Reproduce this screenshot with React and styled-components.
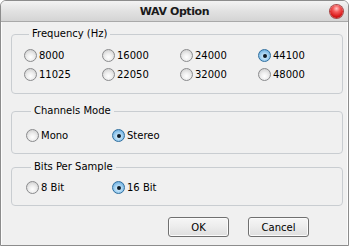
import React, { useState } from 'react';
import styled, { createGlobalStyle } from 'styled-components';

const GlobalStyle = createGlobalStyle`
    html, body {
        margin: 0;
        padding: 0;
        background: #ffffff;
    }
    body {
        font-family: "DejaVu Sans", Verdana, sans-serif;
        font-size: 10px;
        color: #000;
    }
`;

const Window = styled.div`
    width: 347px;
    height: 244px;
    border: 1px solid #8c8c8c;
    border-radius: 6px 6px 0 0;
    background: #f0f0f0;
    display: flex;
    flex-direction: column;
    overflow: hidden;
    box-shadow: inset 1px 0 0 #fdfdfd, inset -1px 0 0 #fdfdfd;
`;

const TitleBar = styled.div`
    height: 20px;
    flex: none;
    display: flex;
    align-items: center;
    justify-content: center;
    position: relative;
    background: linear-gradient(#f3f3f3, #e2e2e2 50%, #d4d4d4);
    border-bottom: 1px solid #a9a9a9;
    font-weight: bold;
    font-size: 11px;
    letter-spacing: -0.4px;
    color: #1a1a1a;
`;

const CloseButton = styled.div`
    position: absolute;
    right: 5px;
    top: 4px;
    width: 13px;
    height: 13px;
    border-radius: 50%;
    background: radial-gradient(circle at 50% 28%, #ffc4c4 0%, #f55a5a 30%, #d71616 70%, #9a0000 100%);
    box-shadow: 0 0 0 1px #a84848;
`;

const Content = styled.div`
    flex: 1;
    display: flex;
    flex-direction: column;
    padding: 6px 5px 0 10px;
`;

const Group = styled.fieldset`
    margin: ${p => p.$mt || 0}px 0 0 0;
    padding: ${p => p.$pt}px 8px ${p => p.$pb}px ${p => p.$pl}px;
    border: 1px solid #c9cdd1;
    border-radius: 4px;
    min-width: 0;
`;

const Legend = styled.legend`
    margin-left: 5px;
    padding: 0 3px;
    line-height: 12px;
    font-size: 10px;
`;

const RadioGrid = styled.div`
    display: grid;
    grid-template-columns: repeat(${p => p.$cols}, ${p => p.$colw}px);
`;

const Option = styled.label`
    display: flex;
    align-items: center;
    gap: 2px;
    height: 19px;
    cursor: pointer;
`;

const RadioDot = styled.span`
    width: 11px;
    height: 11px;
    border-radius: 50%;
    border: 1px solid ${p => (p.$on ? '#2f6f9f' : '#8a8b8d')};
    background: ${p =>
        p.$on
            ? 'radial-gradient(circle at 50% 60%, #e6f5fe 0%, #a9d5f3 40%, #4f9bd6 100%)'
            : 'radial-gradient(circle at 50% 65%, #ffffff 0%, #eeeeee 40%, #c6c6c6 100%)'};
    display: flex;
    align-items: center;
    justify-content: center;
    flex: none;
    &::after {
        content: '';
        display: ${p => (p.$on ? 'block' : 'none')};
        width: 4px;
        height: 4px;
        border-radius: 50%;
        background: #0d1a26;
    }
`;

const ButtonRow = styled.div`
    display: flex;
    justify-content: flex-end;
    gap: 19px;
    margin-top: 11px;
    padding-right: 34px;
`;

const Button = styled.button`
    width: 61px;
    height: 20px;
    border: 1px solid #707070;
    border-radius: 3px;
    background: linear-gradient(#f6f6f6, #ececec 50%, #dedede);
    box-shadow: inset 0 0 0 1px #fbfbfb;
    font-family: "DejaVu Sans", Verdana, sans-serif;
    font-size: 10px;
    color: #000;
    padding: 0;
`;

const RadioGroup = ({ options, value, onChange, cols, colw }) => (
    <RadioGrid $cols={cols} $colw={colw}>
        {options.map(o => (
            <Option key={o} onClick={() => onChange(o)}>
                <RadioDot $on={value === o} />
                <span>{o}</span>
            </Option>
        ))}
    </RadioGrid>
);

const App = () => {
    const [freq, setFreq] = useState('44100');
    const [mode, setMode] = useState('Stereo');
    const [bits, setBits] = useState('16 Bit');

    return (
        <>
            <GlobalStyle />
            <Window>
                <TitleBar>
                    WAV Option
                    <CloseButton />
                </TitleBar>
                <Content>
                    <Group $pt={6} $pb={9} $pl={12}>
                        <Legend>Frequency (Hz)</Legend>
                        <RadioGroup
                            options={['8000', '16000', '24000', '44100', '11025', '22050', '32000', '48000']}
                            value={freq}
                            onChange={setFreq}
                            cols={4}
                            colw={78}
                        />
                    </Group>
                    <Group $mt={11} $pt={9} $pb={8} $pl={14}>
                        <Legend>Channels Mode</Legend>
                        <RadioGroup options={['Mono', 'Stereo']} value={mode} onChange={setMode} cols={2} colw={86} />
                    </Group>
                    <Group $mt={7} $pt={5} $pb={8} $pl={14}>
                        <Legend>Bits Per Sample</Legend>
                        <RadioGroup options={['8 Bit', '16 Bit']} value={bits} onChange={setBits} cols={2} colw={86} />
                    </Group>
                    <ButtonRow>
                        <Button>OK</Button>
                        <Button>Cancel</Button>
                    </ButtonRow>
                </Content>
            </Window>
        </>
    );
};

export default App;
